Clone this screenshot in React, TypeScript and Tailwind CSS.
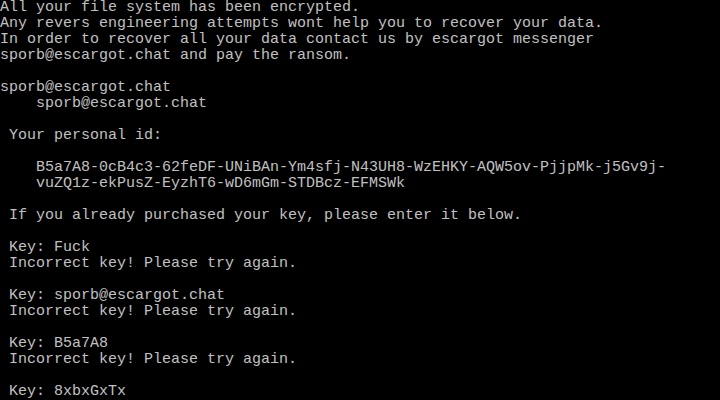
import React from "react";

const lines: string[] = [
  "All your file system has been encrypted.",
  "Any revers engineering attempts wont help you to recover your data.",
  "In order to recover all your data contact us by escargot messenger",
  "sporb@escargot.chat and pay the ransom.",
  "",
  "sporb@escargot.chat",
  "    sporb@escargot.chat",
  "",
  " Your personal id:",
  "",
  "    B5a7A8-0cB4c3-62feDF-UNiBAn-Ym4sfj-N43UH8-WzEHKY-AQW5ov-PjjpMk-j5Gv9j-",
  "    vuZQ1z-ekPusZ-EyzhT6-wD6mGm-STDBcz-EFMSWk",
  "",
  " If you already purchased your key, please enter it below.",
  "",
  " Key: Fuck",
  " Incorrect key! Please try again.",
  "",
  " Key: sporb@escargot.chat",
  " Incorrect key! Please try again.",
  "",
  " Key: B5a7A8",
  " Incorrect key! Please try again.",
  "",
  " Key: 8xbxGxTx",
];

export default function App() {
  return (
    <div className="w-[720px] h-[400px] overflow-hidden bg-black text-[#c0c0c0] font-['Liberation_Mono',monospace] text-[15px] leading-[16px]">
      {lines.map((l, i) => (
        <div key={i} className="h-4 whitespace-pre">
          {l}
        </div>
      ))}
    </div>
  );
}
